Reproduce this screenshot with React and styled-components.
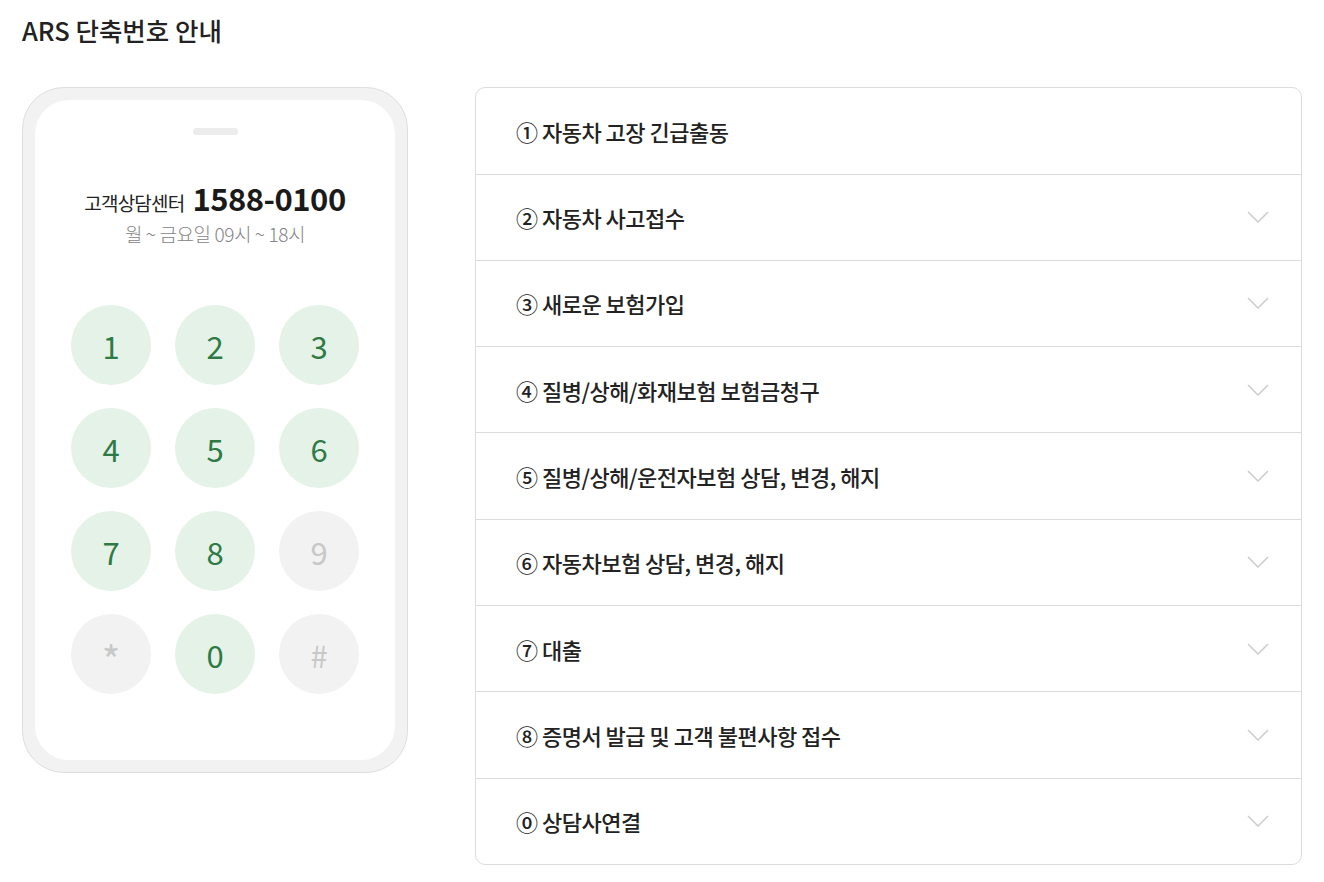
import styled, { createGlobalStyle } from "styled-components";

const GlobalStyle = createGlobalStyle`
  body {
    margin: 0;
    background: #fff;
    font-family: "Noto Sans CJK KR", "Noto Sans", sans-serif;
    color: #222;
  }
`;

const Page = styled.div`
    padding: 12px 22px 0 22px;
`;

const Title = styled.h2`
    margin: 0;
    font-size: 25.5px;
    font-weight: 500;
    line-height: 36px;
    letter-spacing: 0;
    color: #222;
`;

const Layout = styled.div`
    display: flex;
    align-items: flex-start;
    gap: 67px;
    margin-top: 39px;
`;

const Phone = styled.div`
    box-sizing: border-box;
    width: 386px;
    height: 686px;
    padding: 12px;
    background: #f2f2f2;
    border: 1px solid #dedede;
    border-radius: 42px;
    flex-shrink: 0;
`;

const Screen = styled.div`
    height: 100%;
    background: #fff;
    border-radius: 34px;
    display: flex;
    flex-direction: column;
    align-items: center;
    padding-top: 28px;
    box-sizing: border-box;
`;

const Notch = styled.div`
    width: 45px;
    height: 7px;
    border-radius: 4px;
    background: #ececec;
`;

const CenterLine = styled.div`
    margin-top: 40px;
    display: flex;
    align-items: baseline;
    gap: 8px;
`;

const CenterLabel = styled.span`
    font-size: 19px;
    letter-spacing: -0.8px;
    color: #222;
`;

const CenterNumber = styled.span`
    font-size: 31px;
    font-weight: 700;
    letter-spacing: -0.5px;
    color: #1a1a1a;
`;

const Hours = styled.div`
    margin-top: 0;
    font-size: 19px;
    letter-spacing: -0.4px;
    color: #858585;
    font-weight: 300;
`;

const Keypad = styled.div`
    margin-top: 58px;
    display: grid;
    grid-template-columns: repeat(3, 80px);
    column-gap: 24px;
    row-gap: 23px;
`;

const Key = styled.div`
    width: 80px;
    height: 80px;
    border-radius: 50%;
    display: flex;
    align-items: center;
    justify-content: center;
    font-size: ${({ $big }) => ($big ? "40px" : "31px")};
    padding-top: ${({ $big }) => ($big ? "10px" : "0")};
    box-sizing: border-box;
    font-weight: 400;
    background: ${({ $active }) => ($active ? "#e4f2e8" : "#f2f2f2")};
    color: ${({ $active }) => ($active ? "#2f7a44" : "#c8c8c8")};
`;

const List = styled.div`
    flex: 1;
    border: 1px solid #dcdcdc;
    border-radius: 10px;
    overflow: hidden;
    background: #fff;
`;

const Row = styled.div`
    box-sizing: border-box;
    display: flex;
    align-items: center;
    justify-content: space-between;
    height: ${({ $first }) => ($first ? "85.5px" : "86.3px")};
    padding: 0 32px 0 40px;
    border-top: ${({ $first }) => ($first ? "none" : "1px solid #dcdcdc")};
`;

const RowLabel = styled.span`
    font-size: 22px;
    font-weight: 500;
    letter-spacing: -0.5px;
    color: #222;
`;

const Chevron = styled.svg`
    width: 22px;
    height: 12px;
`;

const keys = [
    { k: "1", on: true },
    { k: "2", on: true },
    { k: "3", on: true },
    { k: "4", on: true },
    { k: "5", on: true },
    { k: "6", on: true },
    { k: "7", on: true },
    { k: "8", on: true },
    { k: "9", on: false },
    { k: "*", on: false, big: true },
    { k: "0", on: true },
    { k: "#", on: false },
];

const items = [
    "① 자동차 고장 긴급출동",
    "② 자동차 사고접수",
    "③ 새로운 보험가입",
    "④ 질병/상해/화재보험 보험금청구",
    "⑤ 질병/상해/운전자보험 상담, 변경, 해지",
    "⑥ 자동차보험 상담, 변경, 해지",
    "⑦ 대출",
    "⑧ 증명서 발급 및 고객 불편사항 접수",
    "⓪ 상담사연결",
];

const App = () => {
    return (
        <Page>
            <GlobalStyle />
            <Title>ARS 단축번호 안내</Title>
            <Layout>
                <Phone>
                    <Screen>
                        <Notch />
                        <CenterLine>
                            <CenterLabel>고객상담센터</CenterLabel>
                            <CenterNumber>1588-0100</CenterNumber>
                        </CenterLine>
                        <Hours>월 ~ 금요일 09시 ~ 18시</Hours>
                        <Keypad>
                            {keys.map(({ k, on, big }) => (
                                <Key key={k} $active={on} $big={big}>
                                    {k}
                                </Key>
                            ))}
                        </Keypad>
                    </Screen>
                </Phone>
                <List>
                    {items.map((label, i) => (
                        <Row key={label} $first={i === 0}>
                            <RowLabel>{label}</RowLabel>
                            {i > 0 && (
                                <Chevron viewBox="0 0 22 12" fill="none">
                                    <path d="M1 1l10 10 10-10" stroke="#cccccc" strokeWidth="1.5" />
                                </Chevron>
                            )}
                        </Row>
                    ))}
                </List>
            </Layout>
        </Page>
    );
};

export default App;
